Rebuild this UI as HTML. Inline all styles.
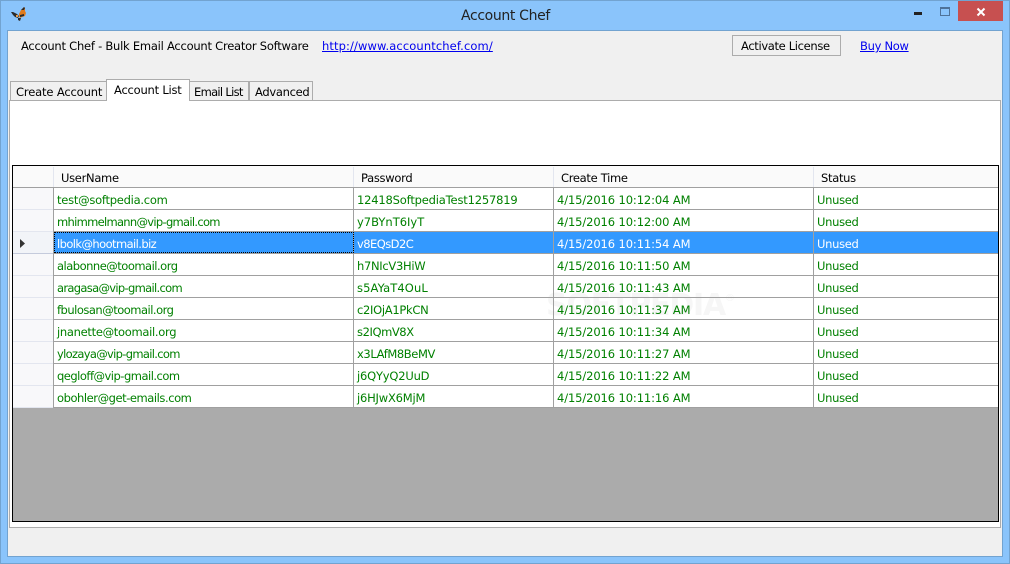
<!DOCTYPE html>
<html><head><meta charset="utf-8"><style>
html,body{margin:0;padding:0}
#w{position:relative;width:1010px;height:564px;overflow:hidden;background:#8ac4fb;font:12px "DejaVu Sans","Liberation Sans",sans-serif;color:#000}
#w div,#w a{position:absolute;white-space:nowrap}
.t{line-height:14px;height:14px;font-size:11.5px}
.g{color:#008000;letter-spacing:-.3px}
.d{letter-spacing:-.11px}
.h{letter-spacing:-.3px;color:#000}
.l{color:#0000ee;text-decoration:underline}
.hl{background:#a0a0a0;height:1px;left:54px;width:944px}
.rh{left:13px;width:40px;height:21px;background:#f8f8fa;border-bottom:1px solid #e3e6ef}
.v{width:1px;background:#a0a0a0;top:188px;height:219px}
.tab{background:#f0f0f0;border:1px solid #acacac;box-sizing:border-box}
</style></head><body><div id="w">
<div style="left:0;top:0;width:1010px;height:1px;background:#72a3d0"></div>
<div style="left:0;top:0;width:1px;height:564px;background:#72a3d0"></div>
<div style="left:1009px;top:0;width:1px;height:564px;background:#72a3d0"></div>
<div style="left:0;top:563px;width:1010px;height:1px;background:#72a3d0"></div>
<svg style="position:absolute;left:10px;top:6px" width="17" height="16" viewBox="0 0 17 16"><path d="M1 6h2l4 2 2 2-1 2-3-1-2-2z" fill="#2a2a2a"/><path d="M9 8l2-4 3-3 1 1 0 3 1 2-1 3-3 1-2 1-1-2z" fill="#e07a1c"/><path d="M11 4l3-3 1 1-1 2zM10 9l4-1 0 2-4 1zM8 12l3 0-1 3-2-1z" fill="#2a2a2a"/><path d="M6 9l2 0 0 2-2 0z" fill="#e8a050"/></svg>
<div class="t" style="left:461px;top:8px;font-size:14px;line-height:16px;height:16px;letter-spacing:-.35px;color:#222">Account Chef</div>
<div style="left:914px;top:12px;width:8px;height:3px;background:#222"></div>
<div style="left:940px;top:7px;width:8px;height:6px;border:1px solid #4f7298;border-top-width:2px"></div>
<div style="left:958px;top:1px;width:45px;height:20px;background:#c75050"></div>
<svg style="position:absolute;left:976px;top:7px" width="10" height="10" viewBox="0 0 10 10"><path d="M1.500 1.500L8.500 8.500M8.500 1.500L1.500 8.500" stroke="#fff" stroke-width="2"/></svg>

<div style="left:7px;top:30px;width:994px;height:525px;background:#f0f0f0;border:1px solid #72a3d0"></div>
<div class="t h" style="left:21px;top:39px;letter-spacing:-.24px">Account Chef - Bulk Email Account Creator Software</div>
<a class="t l" style="left:322px;top:39px;letter-spacing:.11px">http://www.accountchef.com/</a>
<div class="tab" style="left:732px;top:35px;width:109px;height:21px"></div>
<div class="t h" style="left:741px;top:39px;letter-spacing:-.34px">Activate License</div>
<a class="t l" style="left:860px;top:39px;letter-spacing:-.3px">Buy Now</a>

<div style="left:9px;top:100px;width:990px;height:426px;background:#fff;border:1px solid #acacac"></div>
<div class="tab" style="left:10px;top:81px;width:97px;height:20px"></div>
<div class="tab" style="left:189px;top:81px;width:60px;height:20px"></div>
<div class="tab" style="left:249px;top:81px;width:64px;height:20px"></div>
<div class="tab" style="left:106px;top:79px;width:84px;height:22px;background:#fff;border-bottom:0"></div>
<div class="t h" style="left:16px;top:85px;letter-spacing:-.15px">Create Account</div>
<div class="t h" style="left:114px;top:83px;letter-spacing:-.22px">Account List</div>
<div class="t h" style="left:194px;top:85px;letter-spacing:-.7px">Email List</div>
<div class="t h" style="left:255px;top:85px">Advanced</div>

<div style="left:12px;top:165px;width:985px;height:355px;background:#ababab;border:1px solid #000"></div>
<div style="left:13px;top:166px;width:985px;height:21px;background:#fafafa;border-bottom:1px solid #a0a0a0"></div>
<div style="left:53px;top:167px;width:1px;height:20px;background:#e3e6ef"></div>
<div style="left:353px;top:167px;width:1px;height:20px;background:#e3e6ef"></div>
<div style="left:553px;top:167px;width:1px;height:20px;background:#e3e6ef"></div>
<div style="left:813px;top:167px;width:1px;height:20px;background:#e3e6ef"></div>
<div class="t h" style="left:61px;top:171px">UserName</div>
<div class="t h" style="left:361px;top:171px">Password</div>
<div class="t h" style="left:561px;top:171px">Create Time</div>
<div class="t h" style="left:821px;top:171px">Status</div>

<div style="left:54px;top:188px;width:944px;height:219px;background:#fff"></div>
<div class="t" style="left:546px;top:282px;font-size:30px;line-height:34px;height:34px;color:#f6f6f6;font-weight:bold;letter-spacing:-1.2px">SOFTPEDIA<span style="font-size:10px;vertical-align:14px;font-weight:normal;letter-spacing:0">®</span></div>
<div style="left:54px;top:232px;width:944px;height:21px;background:#3399ff"></div>
<div class="rh" style="top:188px"></div><div class="rh" style="top:210px"></div><div class="rh" style="top:232px;background:#f2f4f8;border-bottom-color:#c5cbdc"></div><div class="rh" style="top:254px"></div><div class="rh" style="top:276px"></div><div class="rh" style="top:298px"></div><div class="rh" style="top:320px"></div><div class="rh" style="top:342px"></div><div class="rh" style="top:364px"></div><div class="rh" style="top:386px"></div>
<svg style="position:absolute;left:20px;top:239px" width="6" height="9"><path d="M0 0L5 4.500L0 9z" fill="#333"/></svg>
<div class="hl" style="top:209px"></div><div class="hl" style="top:231px"></div><div class="hl" style="top:253px"></div><div class="hl" style="top:275px"></div><div class="hl" style="top:297px"></div><div class="hl" style="top:319px"></div><div class="hl" style="top:341px"></div><div class="hl" style="top:363px"></div><div class="hl" style="top:385px"></div><div class="hl" style="top:407px"></div>
<div style="left:53px;top:188px;width:1px;height:220px;background:#a0a0a0"></div>
<div class="v" style="left:353px"></div><div class="v" style="left:553px"></div><div class="v" style="left:813px"></div>
<div style="left:54px;top:232px;width:298px;height:19px;border:1px dotted #000"></div>

<div class="t g" style="left:57px;top:193px;letter-spacing:-.25px">test@softpedia.com</div><div class="t g" style="left:357px;top:193px;letter-spacing:-.18px">12418SoftpediaTest1257819</div><div class="t g d" style="left:557px;top:193px">4/15/2016 10:12:04 AM</div><div class="t g" style="left:817px;top:193px">Unused</div>
<div class="t g" style="left:57px;top:215px;letter-spacing:-.7px">mhimmelmann@vip-gmail.com</div><div class="t g" style="left:357px;top:215px;letter-spacing:0">y7BYnT6IyT</div><div class="t g d" style="left:557px;top:215px">4/15/2016 10:12:00 AM</div><div class="t g" style="left:817px;top:215px">Unused</div>
<div class="t g" style="left:57px;top:237px;color:#fff;letter-spacing:-.58px">lbolk@hootmail.biz</div><div class="t g" style="left:357px;top:237px;color:#fff;letter-spacing:-.55px">v8EQsD2C</div><div class="t g d" style="left:557px;top:237px;color:#fff">4/15/2016 10:11:54 AM</div><div class="t g" style="left:817px;top:237px;color:#fff">Unused</div>
<div class="t g" style="left:57px;top:259px;letter-spacing:-.5px">alabonne@toomail.org</div><div class="t g" style="left:357px;top:259px">h7NIcV3HiW</div><div class="t g d" style="left:557px;top:259px">4/15/2016 10:11:50 AM</div><div class="t g" style="left:817px;top:259px">Unused</div>
<div class="t g" style="left:57px;top:281px;letter-spacing:-.68px">aragasa@vip-gmail.com</div><div class="t g" style="left:357px;top:281px;letter-spacing:.1px">s5AYaT4OuL</div><div class="t g d" style="left:557px;top:281px">4/15/2016 10:11:43 AM</div><div class="t g" style="left:817px;top:281px">Unused</div>
<div class="t g" style="left:57px;top:303px;letter-spacing:-.5px">fbulosan@toomail.org</div><div class="t g" style="left:357px;top:303px">c2IOjA1PkCN</div><div class="t g d" style="left:557px;top:303px">4/15/2016 10:11:37 AM</div><div class="t g" style="left:817px;top:303px">Unused</div>
<div class="t g" style="left:57px;top:325px">jnanette@toomail.org</div><div class="t g" style="left:357px;top:325px;letter-spacing:-.42px">s2IQmV8X</div><div class="t g d" style="left:557px;top:325px">4/15/2016 10:11:34 AM</div><div class="t g" style="left:817px;top:325px">Unused</div>
<div class="t g" style="left:57px;top:347px;letter-spacing:-.68px">ylozaya@vip-gmail.com</div><div class="t g" style="left:357px;top:347px;letter-spacing:-.39px">x3LAfM8BeMV</div><div class="t g d" style="left:557px;top:347px">4/15/2016 10:11:27 AM</div><div class="t g" style="left:817px;top:347px">Unused</div>
<div class="t g" style="left:57px;top:369px;letter-spacing:-.5px">qegloff@vip-gmail.com</div><div class="t g" style="left:357px;top:369px;letter-spacing:-.2px">j6QYyQ2UuD</div><div class="t g d" style="left:557px;top:369px">4/15/2016 10:11:22 AM</div><div class="t g" style="left:817px;top:369px">Unused</div>
<div class="t g" style="left:57px;top:391px;letter-spacing:-.44px">obohler@get-emails.com</div><div class="t g" style="left:357px;top:391px;letter-spacing:-.2px">j6HJwX6MjM</div><div class="t g d" style="left:557px;top:391px">4/15/2016 10:11:16 AM</div><div class="t g" style="left:817px;top:391px">Unused</div>
</div></body></html>
